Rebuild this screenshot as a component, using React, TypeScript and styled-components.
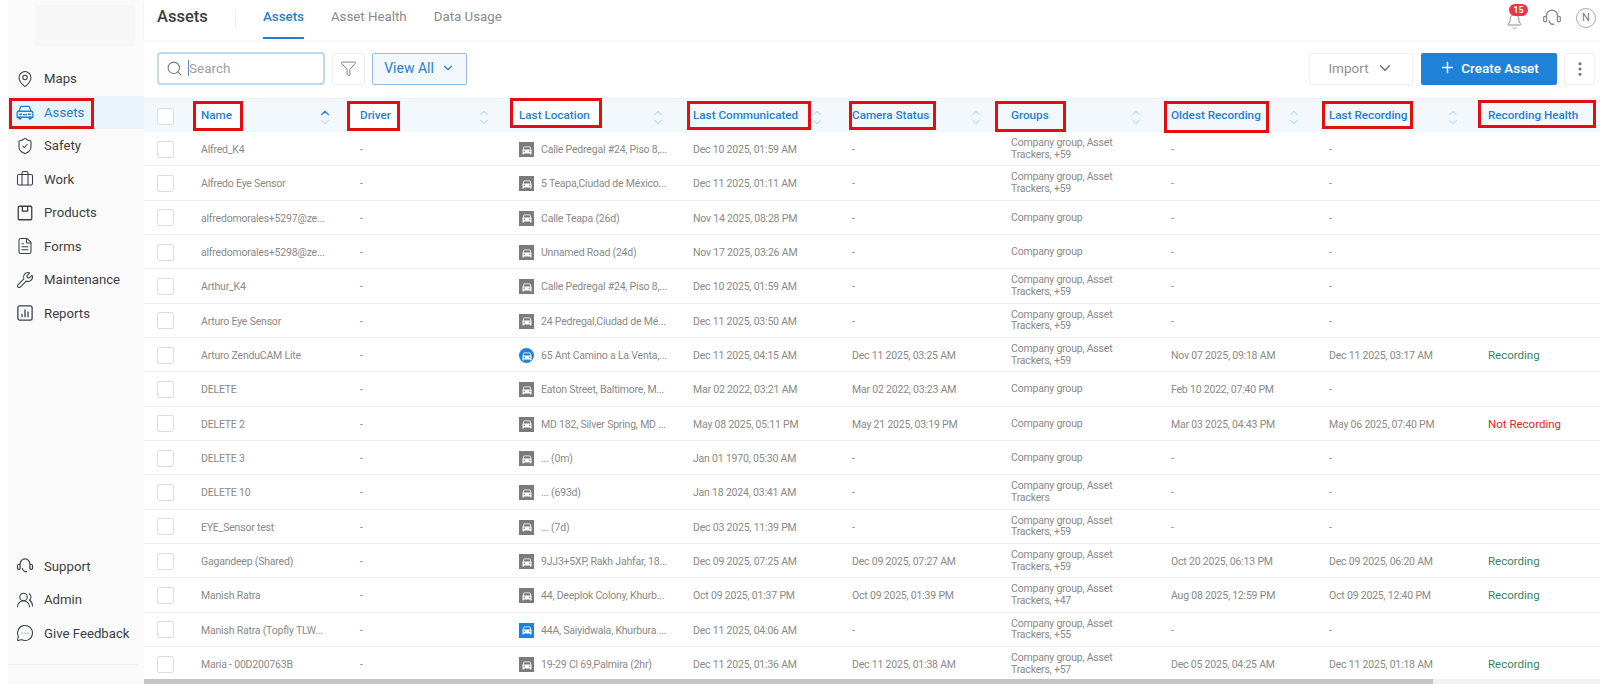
import { FC, ReactNode } from 'react';
import styled, { createGlobalStyle } from 'styled-components';
import {
  MapPin, ShieldCheck, Briefcase, FileText, Wrench, UsersRound, MessageCircleMore,
  Search, Funnel, ChevronDown, ChevronUp, Plus, EllipsisVertical, Bell,
} from 'lucide-react';

const GlobalStyle = createGlobalStyle`
  html, body {
    margin: 0;
    height: 100%;
    overflow: hidden;
    background: #fff;
    font-family: Roboto, "Liberation Sans", sans-serif;
  }
  * { box-sizing: border-box; }
`;

const COLUMNS = '57px 159px 159px 174px 159px 159px 160px 158px 159px 301px';

const Page = styled.div`
  display: flex;
  width: 1600px;
  height: 684px;
  padding-left: 8px;
`;

const Sidebar = styled.aside`
  width: 136px;
  flex-shrink: 0;
  display: flex;
  flex-direction: column;
  background: #fafafa;
`;

const LogoSlot = styled.div`
  height: 42px;
  margin: 5px 9px 15px 27px;
  background: #f7f7f7;
`;

const NavList = styled.nav`
  display: flex;
  flex-direction: column;
`;

const NavItem = styled.div<{ $active?: boolean }>`
  position: relative;
  height: 33.5px;
  display: flex;
  align-items: center;
  gap: 10px;
  padding-left: 8px;
  font-size: 13.2px;
  white-space: nowrap;
  color: ${({ $active }) => ($active ? '#1f7fd6' : '#3a3f45')};
  background: ${({ $active }) => ($active ? '#e9f3fc' : 'transparent')};

  svg { flex-shrink: 0; }
`;

const Spacer = styled.div`
  flex: 1;
`;

const SideFoot = styled.div`
  display: flex;
  flex-direction: column;
  padding-bottom: 14px;
  margin-right: 7px;
  border-bottom: 1px solid #eeeeee;
  margin-bottom: 19px;
`;

const RedBox = styled.span<{ $x: number; $y: number; $w: number; $h: number; $fill?: boolean }>`
  position: absolute;
  left: ${({ $x }) => $x}px;
  top: ${({ $y }) => $y}px;
  width: ${({ $w }) => $w}px;
  height: ${({ $h }) => $h}px;
  border: 3px solid #e50e0e;
  background: ${({ $fill }) => ($fill ? '#fff' : 'transparent')};
  pointer-events: none;
`;

const Main = styled.main`
  flex: 1;
  min-width: 0;
  display: flex;
  flex-direction: column;
  background: #fff;
`;

const TopBar = styled.header`
  height: 40px;
  flex-shrink: 0;
  display: flex;
  align-items: flex-start;
  padding-left: 13px;
  box-shadow: 0 1px 3px rgba(0, 0, 0, 0.05);
`;

const PageTitle = styled.div`
  height: 33px;
  display: flex;
  align-items: center;
  width: 78px;
  font-size: 16.5px;
  font-weight: 500;
  color: #3a3d40;
`;

const TitleRule = styled.div`
  width: 1px;
  height: 19px;
  margin-top: 9px;
  background: #eeeeee;
`;

const Tabs = styled.div`
  display: flex;
  gap: 27px;
  margin-left: 27px;
`;

const Tab = styled.div<{ $active?: boolean }>`
  height: 39px;
  padding-top: 8px;
  font-size: 13.3px;
  line-height: 17px;
  font-weight: ${({ $active }) => ($active ? 500 : 400)};
  color: ${({ $active }) => ($active ? '#1f7fd6' : '#8a8a8a')};
  border-bottom: 2px solid ${({ $active }) => ($active ? '#1f7fd6' : 'transparent')};
`;

const TopIcons = styled.div`
  margin-left: auto;
  display: flex;
  align-items: center;
  height: 36px;
  padding-right: 4px;
  color: #8a8a8a;
`;

const BellWrap = styled.div`
  position: relative;
  display: flex;
  margin-top: 7px;
  margin-right: 19px;
`;

const Badge = styled.span`
  position: absolute;
  left: 3px;
  top: -9px;
  width: 19px;
  height: 12px;
  border-radius: 6px;
  background: #ef3340;
  color: #fff;
  font-size: 9px;
  font-weight: 700;
  line-height: 12px;
  text-align: center;
`;

const Avatar = styled.div`
  width: 20px;
  height: 20px;
  margin-left: 14px;
  border-radius: 50%;
  border: 1px solid #a8a8a8;
  font-size: 11px;
  line-height: 18px;
  text-align: center;
  color: #777;
`;

const Toolbar = styled.div`
  height: 58px;
  flex-shrink: 0;
  display: flex;
  align-items: center;
  padding: 0 5px 1px 13px;
`;

const SearchBox = styled.div`
  width: 168px;
  height: 33px;
  display: flex;
  align-items: center;
  gap: 5px;
  padding: 0 0 1px 7px;
  border: 2px solid #bcd9f3;
  border-radius: 4px;
  font-size: 13.5px;
  color: #a0a0a0;
  margin-right: 7px;
`;

const Caret = styled.span`
  display: inline-block;
  width: 1px;
  height: 16px;
  background: #5c8fc4;
  margin-right: -5px;
`;

const IconButton = styled.div`
  width: 33px;
  height: 32px;
  display: flex;
  align-items: center;
  justify-content: center;
  border: 1px solid #eeeeee;
  border-radius: 2px;
  color: #777;
  margin-right: 7px;
`;

const ViewAll = styled.div`
  width: 95px;
  height: 32px;
  display: flex;
  align-items: center;
  justify-content: center;
  gap: 7px;
  padding-bottom: 2px;
  background: #f3f8fd;
  border: 1px solid #93bfea;
  border-radius: 2px;
  font-size: 14px;
  color: #1f7fd6;
`;

const ImportButton = styled.div`
  margin-left: auto;
  width: 104px;
  height: 32px;
  display: flex;
  align-items: center;
  justify-content: center;
  gap: 7px;
  padding-bottom: 2px;
  border: 1px solid #eeeeee;
  border-radius: 2px;
  font-size: 13.5px;
  color: #8f8f8f;
`;

const CreateButton = styled.div`
  width: 136px;
  height: 32px;
  margin-left: 8px;
  display: flex;
  align-items: center;
  justify-content: center;
  gap: 5px;
  padding-bottom: 2px;
  background: #1f82d9;
  border-radius: 2px;
  font-size: 13.5px;
  font-weight: 500;
  color: #fff;
`;

const MoreButton = styled(IconButton)`
  width: 31px;
  margin: 0 0 0 7px;
`;

const TableArea = styled.div`
  flex: 1;
  min-height: 0;
  overflow: hidden;
`;

const ScrollTrack = styled.div`
  height: 5px;
  flex-shrink: 0;
  background: #f1f1f1;
`;

const ScrollThumb = styled.div`
  width: 1289px;
  height: 100%;
  background: #c4c4c4;
`;

const Table = styled.div`
  width: 1645px;
`;

const HeadRow = styled.div`
  display: grid;
  grid-template-columns: ${COLUMNS};
  height: 34px;
  background: #f3f8fd;
  border-top: 1px solid #edf3f9;
`;

const HeadCell = styled.div`
  position: relative;
  display: flex;
  align-items: center;
  padding-bottom: 2px;
  font-size: 11.7px;
  font-weight: 500;
  color: #1f7fd6;
`;

const HeadText = styled.span`
  position: relative;
  z-index: 1;
`;

const SortIcon = styled.span<{ $up?: boolean }>`
  position: absolute;
  right: 28px;
  top: 7px;
  display: flex;
  flex-direction: column;
  color: #c5e0f7;

  svg:first-child { color: ${({ $up }) => ($up ? '#1f7fd6' : '#c5e0f7')}; }
  svg + svg { margin-top: -5px; }
`;

const Row = styled.div`
  display: grid;
  grid-template-columns: ${COLUMNS};
  height: 34.33px;
  border-bottom: 1px solid #eeeeee;
`;

const Cell = styled.div`
  display: flex;
  align-items: center;
  gap: 7px;
  min-width: 0;
  padding-top: 2px;
  font-size: 10.5px;
  letter-spacing: -0.2px;
  line-height: 11.5px;
  color: #8a8a8a;
  white-space: nowrap;
`;

const GroupCell = styled(Cell)`
  white-space: normal;
  padding: 0 38px 0 0;
`;

const CheckCell = styled.div`
  display: flex;
  align-items: center;
  padding: 1px 0 0 13px;
`;

const Checkbox = styled.span`
  width: 17px;
  height: 17px;
  border: 1px solid #dddddd;
  border-radius: 2px;
  background: #fff;
`;

const Health = styled(Cell)<{ $ok: boolean }>`
  font-size: 11.5px;
  letter-spacing: 0;
  color: ${({ $ok }) => ($ok ? '#35875a' : '#ee1c25')};
`;

const CarTile = styled.span<{ $kind: 'idle' | 'live' | 'moving' }>`
  width: 15px;
  height: 15px;
  flex-shrink: 0;
  display: flex;
  align-items: center;
  justify-content: center;
  color: #fff;
  background: ${({ $kind }) => ($kind === 'idle' ? '#7b7b7b' : '#1f82d9')};
  border-radius: ${({ $kind }) => ($kind === 'moving' ? '50%' : '0')};
`;

const CarGlyph: FC = () => (
  <svg width="12" height="12" viewBox="0 0 24 24" fill="currentColor">
    <path d="M18.92 6.01C18.72 5.42 18.16 5 17.5 5h-11c-.66 0-1.21.42-1.42 1.01L3 12v8c0 .55.45 1 1 1h1c.55 0 1-.45 1-1v-1h12v1c0 .55.45 1 1 1h1c.55 0 1-.45 1-1v-8l-2.08-5.99zM6.5 16c-.83 0-1.5-.67-1.5-1.5S5.67 13 6.5 13s1.5.67 1.5 1.5S7.33 16 6.5 16zm11 0c-.83 0-1.5-.67-1.5-1.5s.67-1.5 1.5-1.5 1.5.67 1.5 1.5-.67 1.5-1.5 1.5zM5 11l1.5-4.5h11L19 11H5z" />
  </svg>
);

const CarOutline: FC = () => (
  <svg width="18" height="18" viewBox="0 0 24 24" fill="none" stroke="currentColor" strokeWidth="1.7" strokeLinejoin="round" strokeLinecap="round">
    <path d="M1.5 13.5c0-1.6 1-2.5 2.5-2.5h16c1.5 0 2.5.9 2.5 2.5V19h-21z" />
    <path d="M4 11l1.8-5.2C6.1 5 6.8 4.5 7.6 4.5h8.8c.8 0 1.5.5 1.8 1.3L20 11" />
    <path d="M4 19v2h2.5v-2M17.5 19v2H20v-2" />
    <path d="M5 15h2.5M16.5 15H19M10 15.5h4" />
  </svg>
);

const ProductBox: FC = () => (
  <svg width="18" height="18" viewBox="0 0 24 24" fill="none" stroke="currentColor" strokeWidth="1.7" strokeLinejoin="round">
    <rect x="3" y="3" width="18" height="18" rx="1.5" />
    <path d="M8.5 3v6.5h7V3" />
  </svg>
);

const ReportBox: FC = () => (
  <svg width="18" height="18" viewBox="0 0 24 24" fill="none" stroke="currentColor" strokeWidth="1.7" strokeLinecap="round">
    <rect x="2.5" y="2.5" width="19" height="19" rx="2.5" />
    <path d="M8 17v-3M12 17V8M16 17v-6" />
  </svg>
);

const Headset: FC<{ size?: number }> = ({ size = 19 }) => (
  <svg width={size} height={size} viewBox="0 0 24 24" fill="none" stroke="currentColor" strokeWidth="1.6" strokeLinecap="round" strokeLinejoin="round">
    <path d="M5.5 10V9a6.5 6.5 0 0 1 13 0v1" />
    <rect x="2" y="10" width="3.5" height="6.5" rx="1.5" />
    <rect x="18.5" y="10" width="3.5" height="6.5" rx="1.5" />
    <path d="M8.5 15.5c1 2.5 1.5 4 3.5 4h2" />
  </svg>
);

interface Asset {
  name: string;
  place: string;
  tile?: 'idle' | 'live' | 'moving';
  comm: string;
  camera?: string;
  groups: string;
  oldest?: string;
  last?: string;
  health?: string;
}

const g59 = 'Company group, Asset Trackers, +59';
const single = 'Company group';

const assets: Asset[] = [
  { name: 'Alfred_K4', place: 'Calle Pedregal #24, Piso 8,...', comm: 'Dec 10 2025, 01:59 AM', groups: g59 },
  { name: 'Alfredo Eye Sensor', place: '5 Teapa,Ciudad de México...', comm: 'Dec 11 2025, 01:11 AM', groups: g59 },
  { name: 'alfredomorales+5297@ze...', place: 'Calle Teapa (26d)', comm: 'Nov 14 2025, 08:28 PM', groups: single },
  { name: 'alfredomorales+5298@ze...', place: 'Unnamed Road (24d)', comm: 'Nov 17 2025, 03:26 AM', groups: single },
  { name: 'Arthur_K4', place: 'Calle Pedregal #24, Piso 8,...', comm: 'Dec 10 2025, 01:59 AM', groups: g59 },
  { name: 'Arturo Eye Sensor', place: '24 Pedregal,Ciudad de Mé...', comm: 'Dec 11 2025, 03:50 AM', groups: g59 },
  { name: 'Arturo ZenduCAM Lite', place: '65 Ant Camino a La Venta,...', tile: 'moving', comm: 'Dec 11 2025, 04:15 AM', camera: 'Dec 11 2025, 03:25 AM', groups: g59, oldest: 'Nov 07 2025, 09:18 AM', last: 'Dec 11 2025, 03:17 AM', health: 'Recording' },
  { name: 'DELETE', place: 'Eaton Street, Baltimore, M...', comm: 'Mar 02 2022, 03:21 AM', camera: 'Mar 02 2022, 03:23 AM', groups: single, oldest: 'Feb 10 2022, 07:40 PM' },
  { name: 'DELETE 2', place: 'MD 182, Silver Spring, MD ...', comm: 'May 08 2025, 05:11 PM', camera: 'May 21 2025, 03:19 PM', groups: single, oldest: 'Mar 03 2025, 04:43 PM', last: 'May 06 2025, 07:40 PM', health: 'Not Recording' },
  { name: 'DELETE 3', place: '... (0m)', comm: 'Jan 01 1970, 05:30 AM', groups: single },
  { name: 'DELETE 10', place: '... (693d)', comm: 'Jan 18 2024, 03:41 AM', groups: 'Company group, Asset Trackers' },
  { name: 'EYE_Sensor test', place: '... (7d)', comm: 'Dec 03 2025, 11:39 PM', groups: g59 },
  { name: 'Gagandeep (Shared)', place: '9JJ3+5XP, Rakh Jahfar, 18...', comm: 'Dec 09 2025, 07:25 AM', camera: 'Dec 09 2025, 07:27 AM', groups: g59, oldest: 'Oct 20 2025, 06:13 PM', last: 'Dec 09 2025, 06:20 AM', health: 'Recording' },
  { name: 'Manish Ratra', place: '44, Deeplok Colony, Khurb...', comm: 'Oct 09 2025, 01:37 PM', camera: 'Oct 09 2025, 01:39 PM', groups: 'Company group, Asset Trackers, +47', oldest: 'Aug 08 2025, 12:59 PM', last: 'Oct 09 2025, 12:40 PM', health: 'Recording' },
  { name: 'Manish Ratra (Topfly TLW...', place: '44A, Saiyidwala, Khurbura ...', tile: 'live', comm: 'Dec 11 2025, 04:06 AM', groups: 'Company group, Asset Trackers, +55' },
  { name: 'Maria - 00D200763B', place: '19-29 Cl 69,Palmira (2hr)', comm: 'Dec 11 2025, 01:36 AM', camera: 'Dec 11 2025, 01:38 AM', groups: 'Company group, Asset Trackers, +57', oldest: 'Dec 05 2025, 04:25 AM', last: 'Dec 11 2025, 01:18 AM', health: 'Recording' },
];

const headers = [
  { label: 'Name', box: { $x: -8, $y: 2, $w: 50, $h: 30, $fill: true }, up: true },
  { label: 'Driver', box: { $x: -13, $y: 2, $w: 53, $h: 30, $fill: true } },
  { label: 'Last Location', box: { $x: -9, $y: -1, $w: 92, $h: 30, $fill: true } },
  { label: 'Last Communicated', box: { $x: -6, $y: 2, $w: 124, $h: 29 } },
  { label: 'Camera Status', box: { $x: -3, $y: 2, $w: 87, $h: 29 } },
  { label: 'Groups', box: { $x: -16, $y: 2, $w: 71, $h: 31 } },
  { label: 'Oldest Recording', box: { $x: -7, $y: 2, $w: 105, $h: 32 } },
  { label: 'Last Recording', box: { $x: -7, $y: 2, $w: 91, $h: 28 } },
  { label: 'Recording Health', box: { $x: -10, $y: 1, $w: 118, $h: 28 }, noSort: true },
];

const topNav: { label: string; icon: ReactNode; active?: boolean }[] = [
  { label: 'Maps', icon: <MapPin size={18} strokeWidth={1.4} /> },
  { label: 'Assets', icon: <CarOutline />, active: true },
  { label: 'Safety', icon: <ShieldCheck size={18} strokeWidth={1.4} /> },
  { label: 'Work', icon: <Briefcase size={18} strokeWidth={1.4} /> },
  { label: 'Products', icon: <ProductBox /> },
  { label: 'Forms', icon: <FileText size={18} strokeWidth={1.4} /> },
  { label: 'Maintenance', icon: <Wrench size={18} strokeWidth={1.4} /> },
  { label: 'Reports', icon: <ReportBox /> },
];

const bottomNav: { label: string; icon: ReactNode }[] = [
  { label: 'Support', icon: <Headset size={18} /> },
  { label: 'Admin', icon: <UsersRound size={18} strokeWidth={1.4} /> },
  { label: 'Give Feedback', icon: <MessageCircleMore size={18} strokeWidth={1.4} /> },
];

const App: FC = () => (
  <>
    <GlobalStyle />
    <Page>
      <Sidebar>
        <LogoSlot />
        <NavList>
          {topNav.map((item) => (
            <NavItem key={item.label} $active={item.active}>
              {item.active && <RedBox $x={1} $y={2} $w={85} $h={31} />}
              {item.icon}
              {item.label}
            </NavItem>
          ))}
        </NavList>
        <Spacer />
        <SideFoot>
          {bottomNav.map((item) => (
            <NavItem key={item.label}>
              {item.icon}
              {item.label}
            </NavItem>
          ))}
        </SideFoot>
      </Sidebar>
      <Main>
        <TopBar>
          <PageTitle>Assets</PageTitle>
          <TitleRule />
          <Tabs>
            <Tab $active>Assets</Tab>
            <Tab>Asset Health</Tab>
            <Tab>Data Usage</Tab>
          </Tabs>
          <TopIcons>
            <BellWrap>
              <Bell size={17} strokeWidth={1.4} />
              <Badge>15</Badge>
            </BellWrap>
            <Headset size={20} />
            <Avatar>N</Avatar>
          </TopIcons>
        </TopBar>
        <Toolbar>
          <SearchBox>
            <Search size={17} strokeWidth={1.5} color="#777" />
            <Caret />
            Search
          </SearchBox>
          <IconButton>
            <Funnel size={17} strokeWidth={1.3} />
          </IconButton>
          <ViewAll>
            View All
            <ChevronDown size={14} />
          </ViewAll>
          <ImportButton>
            Import
            <ChevronDown size={18} strokeWidth={1.6} color="#666" />
          </ImportButton>
          <CreateButton>
            <Plus size={17} />
            Create Asset
          </CreateButton>
          <MoreButton>
            <EllipsisVertical size={18} strokeWidth={2.2} />
          </MoreButton>
        </Toolbar>
        <TableArea>
          <Table>
            <HeadRow>
              <CheckCell>
                <Checkbox />
              </CheckCell>
              {headers.map((h) => (
                <HeadCell key={h.label}>
                  <RedBox {...h.box} />
                  <HeadText>{h.label}</HeadText>
                  {!h.noSort && (
                    <SortIcon $up={h.up}>
                      <ChevronUp size={14} strokeWidth={2} />
                      <ChevronDown size={14} strokeWidth={2} />
                    </SortIcon>
                  )}
                </HeadCell>
              ))}
            </HeadRow>
            {assets.map((a) => (
              <Row key={a.name}>
                <CheckCell>
                  <Checkbox />
                </CheckCell>
                <Cell>{a.name}</Cell>
                <Cell>-</Cell>
                <Cell>
                  <CarTile $kind={a.tile ?? 'idle'}>
                    <CarGlyph />
                  </CarTile>
                  {a.place}
                </Cell>
                <Cell>{a.comm}</Cell>
                <Cell>{a.camera ?? '-'}</Cell>
                <GroupCell>{a.groups}</GroupCell>
                <Cell>{a.oldest ?? '-'}</Cell>
                <Cell>{a.last ?? '-'}</Cell>
                {a.health ? <Health $ok={a.health === 'Recording'}>{a.health}</Health> : <Cell />}
              </Row>
            ))}
          </Table>
        </TableArea>
        <ScrollTrack>
          <ScrollThumb />
        </ScrollTrack>
      </Main>
    </Page>
  </>
);

export default App;
